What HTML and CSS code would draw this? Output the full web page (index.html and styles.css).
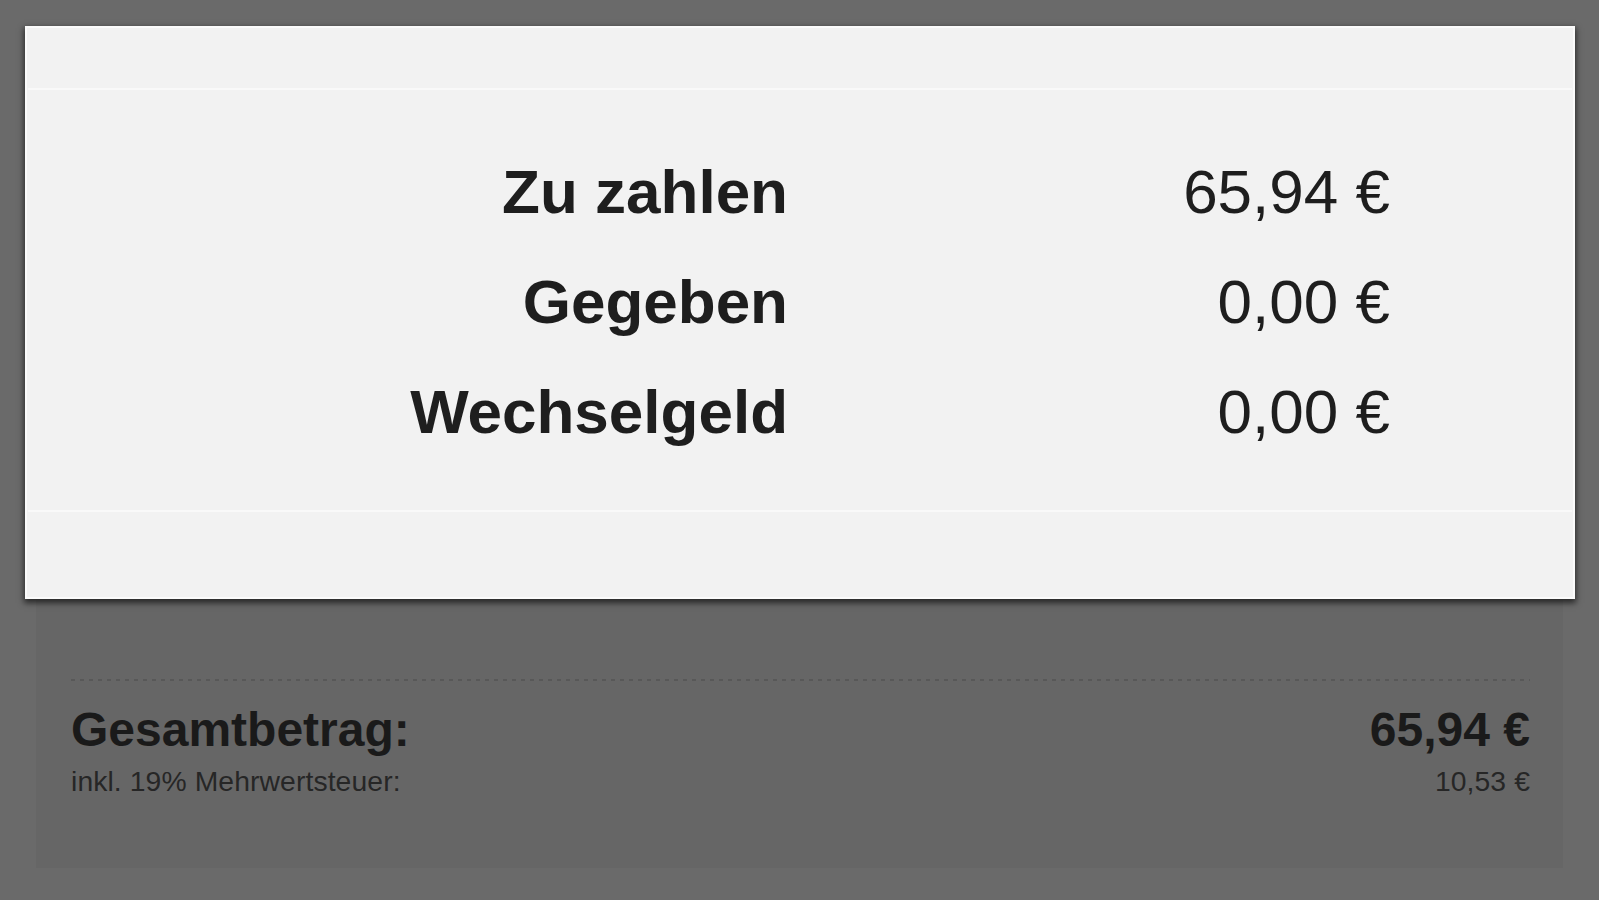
FILE: index.html
```html
<!DOCTYPE html>
<html lang="de">
<head>
<meta charset="utf-8">
<title>Bezahlen</title>
<link rel="stylesheet" href="styles.css">
</head>
<body>
<div class="screen">
  <div class="receipt">
    <div class="card">
      <div class="card-head"></div>
      <div class="card-body">
        <div class="pay-row"><span class="pay-label">Zu zahlen</span><span class="pay-value">65,94 €</span></div>
        <div class="pay-row"><span class="pay-label">Gegeben</span><span class="pay-value">0,00 €</span></div>
        <div class="pay-row"><span class="pay-label">Wechselgeld</span><span class="pay-value">0,00 €</span></div>
      </div>
      <div class="card-foot"></div>
    </div>
    <div class="totals">
      <div class="dots"></div>
      <div class="total-row">
        <span class="total-label">Gesamtbetrag:</span>
        <span class="total-value">65,94 €</span>
      </div>
      <div class="tax-row">
        <span class="tax-label">inkl. 19% Mehrwertsteuer:</span>
        <span class="tax-value">10,53 €</span>
      </div>
    </div>
  </div>
</div>
</body>
</html>
```
FILE: styles.css
```css
html, body {
  margin: 0;
  padding: 0;
}
body {
  background: #6a6a6a;
  font-family: "Liberation Sans", Arial, Helvetica, sans-serif;
  color: #1e1e1e;
}
.screen {
  height: 900px;
  box-sizing: border-box;
  padding-top: 40px;
  background: #6a6a6a;
  overflow: hidden;
}
.receipt {
  margin: 0 36px;
  height: 828px;
  background: #666666;
  display: flex;
  flex-direction: column;
}
.card {
  margin: -14px -12px 0 -11px;
  background: #f2f2f2;
  box-shadow: inset 0 0 0 2px #fbfbfb, 0 3px 6px 1px rgba(0, 0, 0, 0.62);
  position: relative;
}
.card-head {
  height: 62px;
  border-bottom: 2px solid #f9f9f9;
  margin: 0 3px;
}
.card-body {
  padding: 47px 0 43px;
  border-bottom: 2px solid #f9f9f9;
  margin: 0 3px;
}
.card-foot {
  height: 87px;
}
.pay-row {
  display: grid;
  grid-template-columns: 760px 602px;
  height: 110px;
  line-height: 110px;
  font-size: 62px;
}
.pay-label {
  text-align: right;
  font-weight: bold;
}
.pay-value {
  text-align: right;
  font-weight: normal;
}
.totals {
  padding: 0 33px 0 35px;
  color: #1a1a1a;
}
.dots {
  margin-top: 80px;
  height: 2px;
  background-image: linear-gradient(to right, #585858 50%, transparent 50%);
  background-size: 9px 2px;
}
.total-row {
  margin-top: 21px;
  display: flex;
  justify-content: space-between;
  font-size: 48px;
  font-weight: bold;
  line-height: 56px;
}
.tax-row {
  margin-top: 6px;
  display: flex;
  justify-content: space-between;
  font-size: 28.3px;
  line-height: 34px;
  color: #262626;
  letter-spacing: 0.1px;
}
```
